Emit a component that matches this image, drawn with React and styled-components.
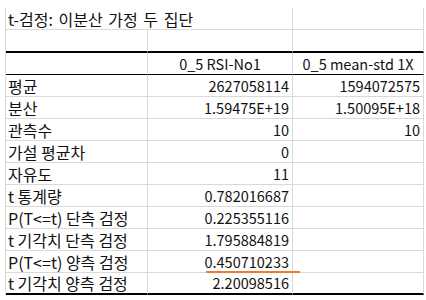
import React from 'react';
import styled, { createGlobalStyle } from 'styled-components';

const GlobalStyle = createGlobalStyle`
  html, body {
    margin: 0;
    padding: 0;
    background: #ffffff;
  }
`;

const Sheet = styled.div`
  position: relative;
  width: 426px;
  height: 300px;
  overflow: hidden;
  padding-top: 8px;
  padding-left: 5px;
  box-sizing: border-box;
  font-family: 'Noto Sans CJK KR', 'Noto Sans', sans-serif;
  color: #111;
`;

const Grid = styled.div`
  display: grid;
  grid-template-columns: 142px 145px 131px;
  border-left: 1px solid #d9d9d9;
  width: 419px;
`;

const Cell = styled.div`
  box-sizing: border-box;
  height: ${(p) => p.$h || 22}px;
  display: flex;
  align-items: center;
  justify-content: ${(p) => (p.$align === 'right' ? 'flex-end' : p.$align === 'center' ? 'center' : 'flex-start')};
  padding: 0 ${(p) => (p.$align === 'right' ? '3px' : '0')} 0 ${(p) => (p.$align === 'left' ? '2px' : '0')};
  border-right: ${(p) => (p.$overflow ? '1px solid transparent' : '1px solid #d9d9d9')};
  border-bottom: ${(p) => p.$bottom || '1px solid #d9d9d9'};
  font-size: ${(p) => (p.$label ? 16 : 14.5)}px;
  line-height: 20px;
  white-space: nowrap;
  overflow: visible;
`;

const Title = styled.span`
  word-spacing: 2px;
`;

const Marker = styled.div`
  position: absolute;
  left: 206px;
  top: 271px;
  width: 94px;
  height: 2px;
  background: #ed7d31;
`;

const rows = [
  ['평균', '2627058114', '1594072575'],
  ['분산', '1.59475E+19', '1.50095E+18'],
  ['관측수', '10', '10'],
  ['가설 평균차', '0', ''],
  ['자유도', '11', ''],
  ['t 통계량', '0.782016687', ''],
  ['P(T<=t) 단측 검정', '0.225355116', ''],
  ['t 기각치 단측 검정', '1.795884819', ''],
  ['P(T<=t) 양측 검정', '0.450710233', ''],
  ['t 기각치 양측 검정', '2.20098516', ''],
];

const App = () => {
  return (
    <>
      <GlobalStyle />
      <Sheet>
        <Grid>
          <Cell $align="left" $label $overflow>
            <Title>t-검정: 이분산 가정 두 집단</Title>
          </Cell>
          <Cell />
          <Cell />

          <Cell $h={23} $bottom="2px solid #000" />
          <Cell $h={23} $bottom="2px solid #000" />
          <Cell $h={23} $bottom="2px solid #000" />

          <Cell $bottom="1px solid #000" />
          <Cell $align="center" $bottom="1px solid #000">0_5 RSI-No1</Cell>
          <Cell $align="center" $bottom="1px solid #000">0_5 mean-std 1X</Cell>

          {rows.map((r, i) => {
            const last = i === rows.length - 1;
            const bottom = last ? '2px solid #000' : undefined;
            return (
              <React.Fragment key={r[0]}>
                <Cell $align="left" $label $bottom={bottom}>{r[0]}</Cell>
                <Cell $align="right" $bottom={bottom}>{r[1]}</Cell>
                <Cell $align="right" $bottom={bottom}>{r[2]}</Cell>
              </React.Fragment>
            );
          })}
        </Grid>
        <Marker />
      </Sheet>
    </>
  );
};

export default App;
